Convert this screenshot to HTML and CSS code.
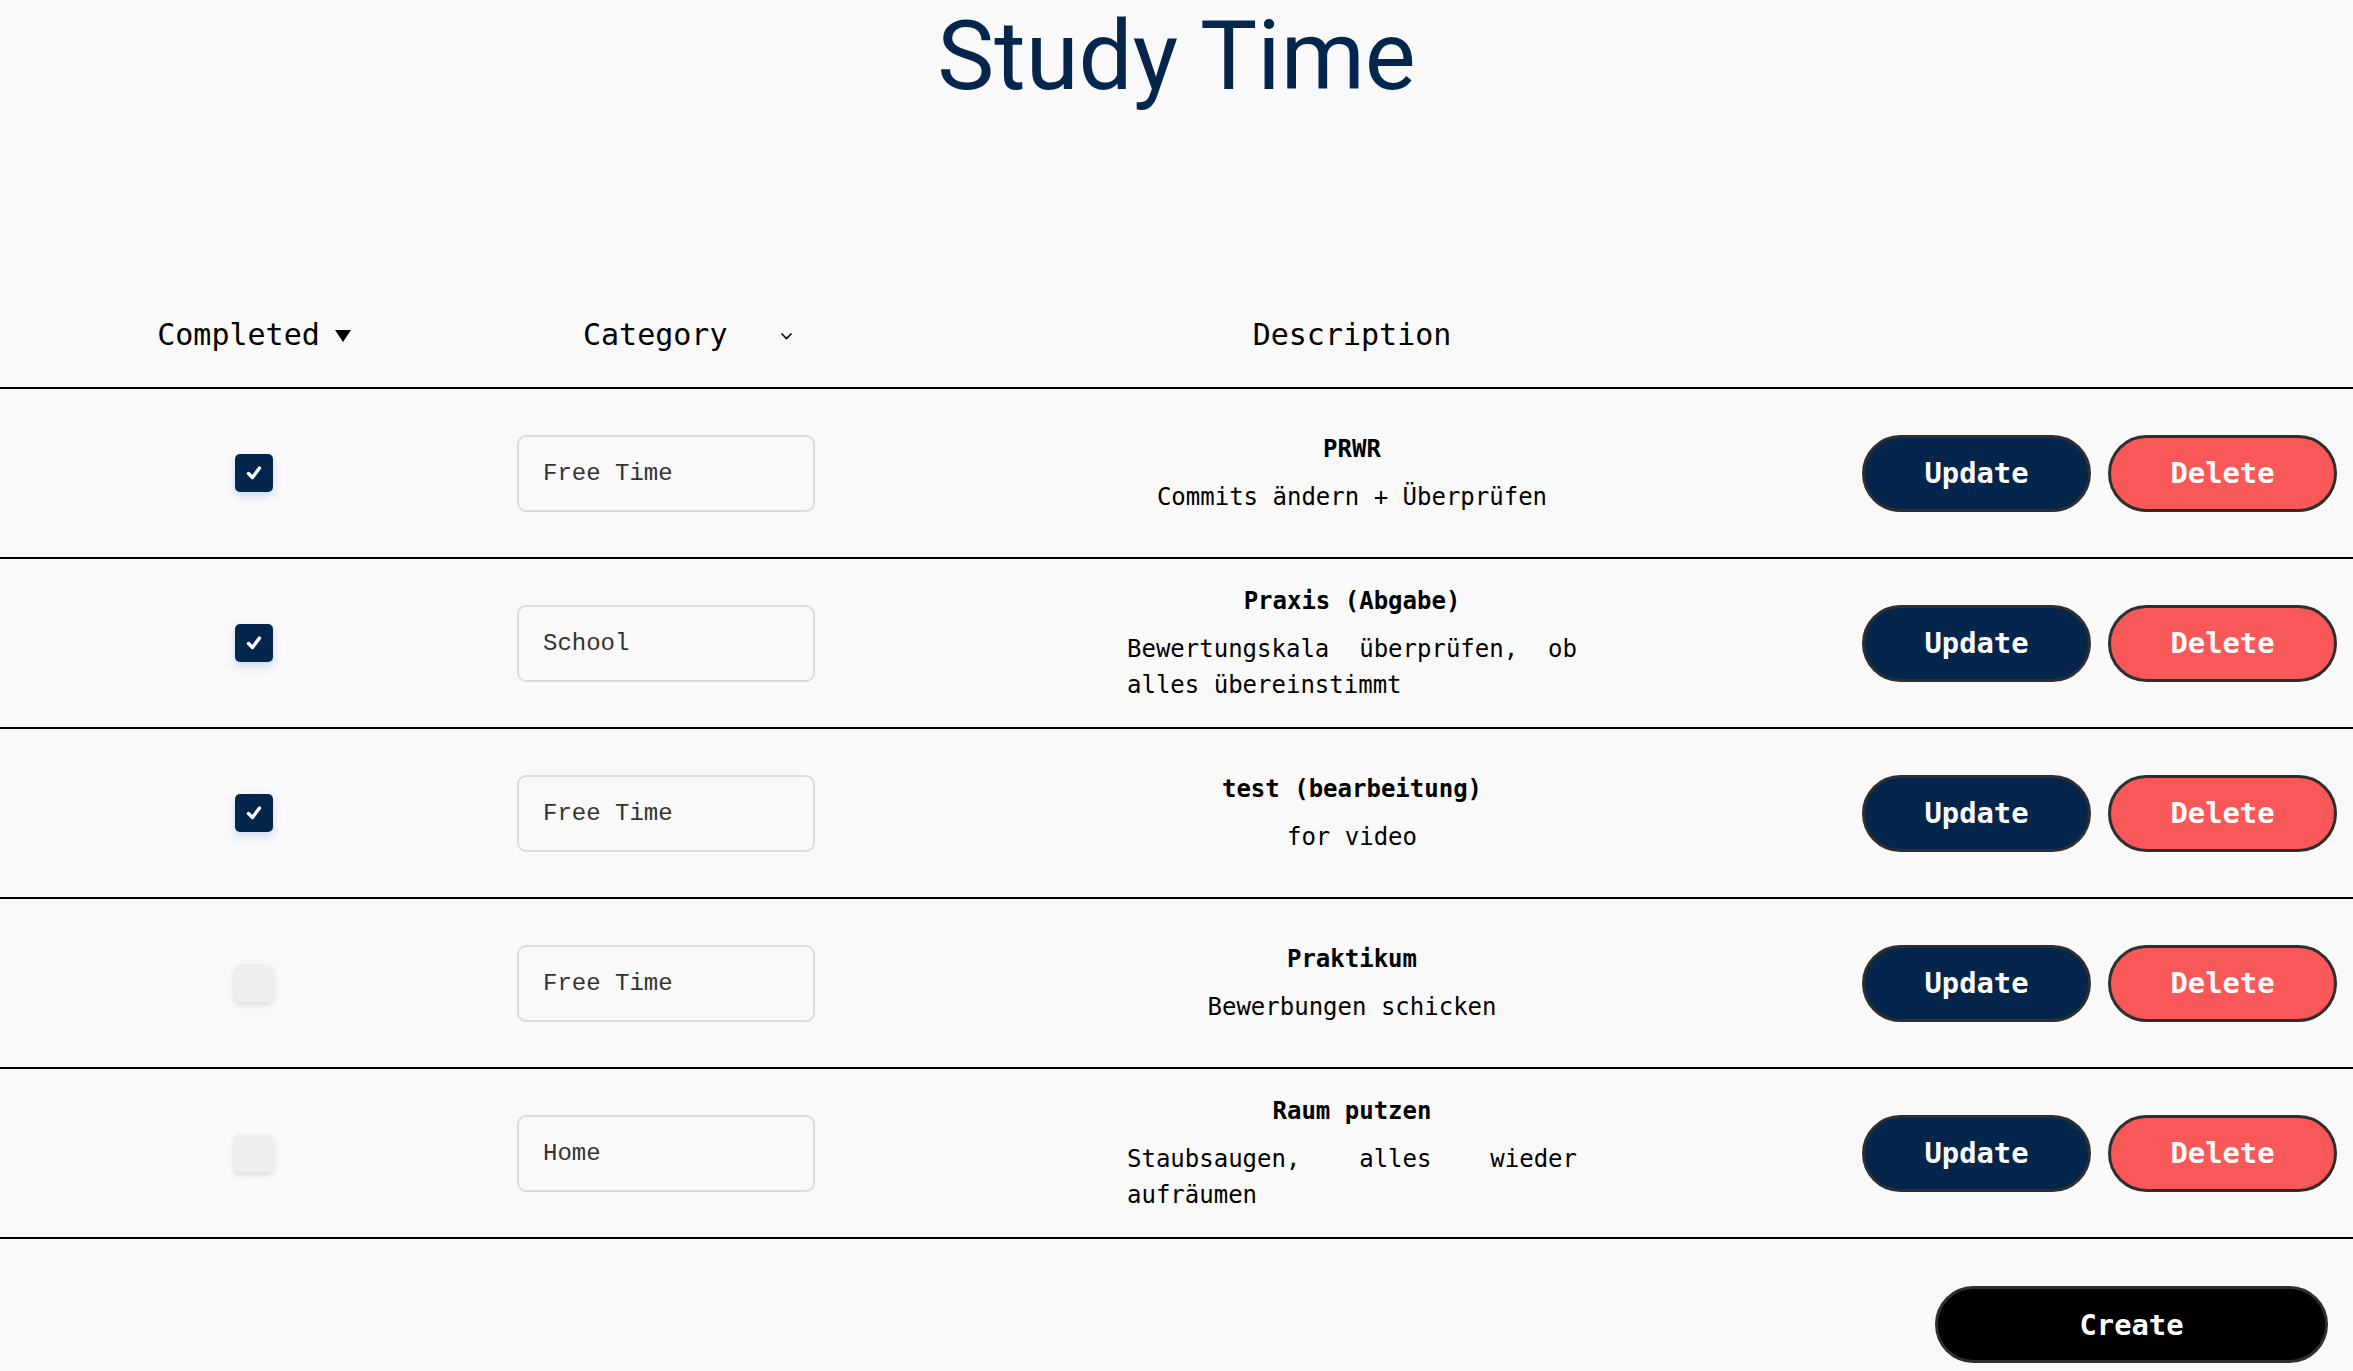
FILE: index.html
```html
<!DOCTYPE html>
<html lang="de">
<head>
<meta charset="utf-8">
<title>Study Time</title>
<link rel="stylesheet" href="styles.css">
</head>
<body>
<h1 class="title">Study Time</h1>
<div class="table">
  <div class="row head">
    <div class="cell c1"><span>Completed</span><svg class="tri" width="16" height="12" viewBox="0 0 16 12"><polygon points="0,0 16,0 8,12" fill="#000"/></svg></div>
    <div class="cell c2"><span>Category</span><svg class="chev" width="13" height="8" viewBox="0 0 13 8"><polyline points="1.5,1.5 6.5,6.5 11.5,1.5" fill="none" stroke="#000" stroke-width="1.6"/></svg></div>
    <div class="cell c3">Description</div>
    <div class="cell c4"></div>
  </div>

  <div class="row">
    <div class="cell c1"><span class="check on"><svg width="38" height="38" viewBox="0 0 38 38"><path d="M13.5 19.5 L17.5 23.5 L24.5 14" fill="none" stroke="#fff" stroke-width="3.4" stroke-linecap="round" stroke-linejoin="round"/></svg></span></div>
    <div class="cell c2"><input class="cat" type="text" value="Free Time"></div>
    <div class="cell c3"><div class="desc-title">PRWR</div><p class="desc-text">Commits ändern + Überprüfen</p></div>
    <div class="cell c4"><button class="btn update">Update</button><button class="btn delete">Delete</button></div>
  </div>

  <div class="row">
    <div class="cell c1"><span class="check on"><svg width="38" height="38" viewBox="0 0 38 38"><path d="M13.5 19.5 L17.5 23.5 L24.5 14" fill="none" stroke="#fff" stroke-width="3.4" stroke-linecap="round" stroke-linejoin="round"/></svg></span></div>
    <div class="cell c2"><input class="cat" type="text" value="School"></div>
    <div class="cell c3"><div class="desc-title">Praxis (Abgabe)</div><p class="desc-text">Bewertungskala überprüfen, ob alles übereinstimmt</p></div>
    <div class="cell c4"><button class="btn update">Update</button><button class="btn delete">Delete</button></div>
  </div>

  <div class="row">
    <div class="cell c1"><span class="check on"><svg width="38" height="38" viewBox="0 0 38 38"><path d="M13.5 19.5 L17.5 23.5 L24.5 14" fill="none" stroke="#fff" stroke-width="3.4" stroke-linecap="round" stroke-linejoin="round"/></svg></span></div>
    <div class="cell c2"><input class="cat" type="text" value="Free Time"></div>
    <div class="cell c3"><div class="desc-title">test (bearbeitung)</div><p class="desc-text">for video</p></div>
    <div class="cell c4"><button class="btn update">Update</button><button class="btn delete">Delete</button></div>
  </div>

  <div class="row">
    <div class="cell c1"><span class="check"></span></div>
    <div class="cell c2"><input class="cat" type="text" value="Free Time"></div>
    <div class="cell c3"><div class="desc-title">Praktikum</div><p class="desc-text">Bewerbungen schicken</p></div>
    <div class="cell c4"><button class="btn update">Update</button><button class="btn delete">Delete</button></div>
  </div>

  <div class="row">
    <div class="cell c1"><span class="check"></span></div>
    <div class="cell c2"><input class="cat" type="text" value="Home"></div>
    <div class="cell c3"><div class="desc-title">Raum putzen</div><p class="desc-text">Staubsaugen, alles wieder aufräumen</p></div>
    <div class="cell c4"><button class="btn update">Update</button><button class="btn delete">Delete</button></div>
  </div>
</div>
<div class="footer"><button class="btn create">Create</button></div>
</body>
</html>
```

FILE: styles.css
```css
html, body {
  margin: 0;
  padding: 0;
  background: #f9f9f9;
}
body {
  font-family: "DejaVu Sans Mono", "Liberation Mono", monospace;
  color: #000;
  overflow: hidden;
}
.title {
  margin: 0 0 169px 0;
  font-family: Roboto, "Liberation Sans", sans-serif;
  font-weight: 400;
  font-size: 96px;
  line-height: 113px;
  color: #05264c;
  text-align: center;
}
.row {
  display: grid;
  grid-template-columns: 508px 316px 1fr 475px;
  padding-right: 16px;
  align-items: center;
  height: 168px;
  border-bottom: 2px solid #000;
}
.row.head {
  height: 105px;
  font-size: 30px;
}
.cell {
  display: flex;
  align-items: center;
}
.c1 {
  justify-content: center;
}
.c2 {
  justify-content: center;
}
.head .c2 {
  justify-content: flex-start;
  padding-left: 75px;
}
.c3 {
  flex-direction: column;
  align-items: center;
  padding-left: 18px;
}
.head .c3 {
  flex-direction: row;
  justify-content: center;
}
.c4 {
  justify-content: flex-end;
  gap: 17px;
}
.tri {
  margin-left: 15px;
  margin-top: 2px;
}
.chev {
  margin-left: 52px;
  margin-top: 2px;
}
.check {
  display: block;
  width: 38px;
  height: 38px;
  border-radius: 5px;
  background: #efefef;
  box-shadow: 0 3px 6px rgba(0, 0, 0, 0.12);
}
.check svg {
  display: block;
}
.check.on {
  background: #05264c;
  box-shadow: 0 4px 9px rgba(40, 110, 220, 0.22);
}
.cat {
  box-sizing: border-box;
  width: 298px;
  height: 77px;
  border: 2px solid #dcdcdc;
  border-radius: 9px;
  background: transparent;
  padding: 0 24px;
  font-family: "Liberation Mono", monospace;
  font-size: 24px;
  color: #333;
  outline: none;
}
.desc-title {
  font-weight: bold;
  font-size: 24px;
  line-height: 36px;
  margin-bottom: 12px;
}
.desc-text {
  margin: 0;
  max-width: 450px;
  font-size: 24px;
  line-height: 36px;
  text-align: justify;
}
.btn {
  box-sizing: border-box;
  height: 77px;
  border: 3px solid #2e2e2e;
  border-radius: 40px;
  font-family: "DejaVu Sans Mono", monospace;
  font-weight: bold;
  font-size: 28.8px;
  color: #fff;
  padding: 0;
  cursor: pointer;
}
.update {
  width: 229px;
  background: #05264c;
}
.delete {
  width: 229px;
  background: #f85858;
}
.footer {
  display: flex;
  justify-content: flex-end;
  padding-right: 25px;
  margin-top: 47px;
}
.create {
  width: 393px;
  background: #000;
}
```
